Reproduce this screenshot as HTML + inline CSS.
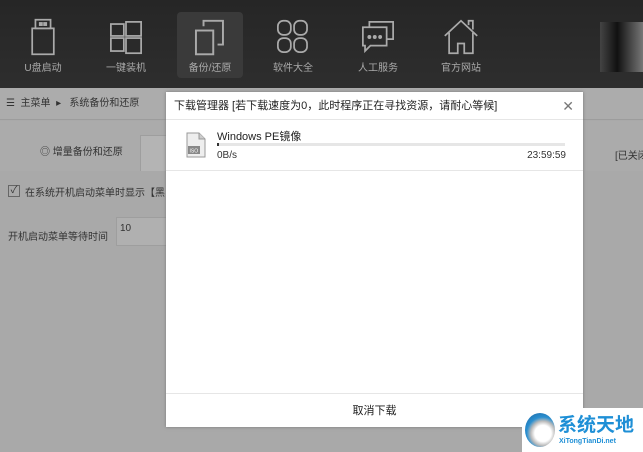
<!DOCTYPE html>
<html><head><meta charset="utf-8"><style>
*{margin:0;padding:0;box-sizing:border-box}
body{width:643px;height:452px;overflow:hidden;background:#a9a9a9;font-family:"Liberation Sans","Noto Sans CJK SC",sans-serif;position:relative;font-size:11px;color:#333}
.top{position:absolute;left:0;top:0;width:643px;height:88px;background:linear-gradient(#262626,#2e2e2e)}
.nav{position:absolute;top:12px;width:66px;height:66px;text-align:center;color:#aaa;font-size:10px}
.nav svg{display:block;margin:6px auto 3px;transform:scale(1.08)}
.sel{background:#3a3a3a;border-radius:4px}
.crumb{position:absolute;top:88px;left:0;width:643px;height:32px;background:#acacac;border-bottom:1px solid #9c9c9c;color:#333;font-size:10px;line-height:32px;padding-left:6px}
.dlg{position:absolute;left:166px;top:92px;width:417px;height:335px;background:#fff;box-shadow:0 0 3px #777}
</style></head><body>
<div class="top">
<div class="nav" style="left:10px"><svg width="24" height="38" viewBox="0 0 24 36" fill="none" stroke="#aaa" stroke-width="1.6"><rect x="5" y="2" width="14" height="8"/><rect x="2" y="10" width="20" height="24"/><rect x="9" y="5" width="2" height="2" fill="#aaa"/><rect x="13" y="5" width="2" height="2" fill="#aaa"/></svg>U盘启动</div>
<div class="nav" style="left:93px"><svg width="32" height="38" viewBox="0 0 32 36" fill="none" stroke="#aaa" stroke-width="1.6"><rect x="2" y="6" width="12" height="11"/><rect x="16" y="4" width="14" height="13"/><rect x="2" y="19" width="12" height="12"/><rect x="16" y="19" width="14" height="14"/></svg>一键装机</div>
<div class="nav sel" style="left:177px"><svg width="32" height="38" viewBox="0 0 32 36" fill="none" stroke="#aaa" stroke-width="1.8"><rect x="3" y="12" width="16" height="22"/><path d="M10 8V3h18v22h-5"/></svg>备份/还原</div>
<div class="nav" style="left:260px"><svg width="32" height="38" viewBox="0 0 32 36" fill="none" stroke="#aaa" stroke-width="1.6"><rect x="2" y="3" width="12" height="13" rx="5"/><rect x="17" y="3" width="12" height="13" rx="5"/><rect x="2" y="19" width="12" height="13" rx="5"/><rect x="17" y="19" width="12" height="13" rx="5"/></svg>软件大全</div>
<div class="nav" style="left:345px"><svg width="32" height="38" viewBox="0 0 32 36" fill="none" stroke="#aaa" stroke-width="1.6"><path d="M2 9h22v17H9l-5 5v-5H2z"/><path d="M8 9V4h22v16h-6"/><circle cx="8" cy="18" r="1" fill="#aaa"/><circle cx="13" cy="18" r="1" fill="#aaa"/><circle cx="18" cy="18" r="1" fill="#aaa"/></svg>人工服务</div>
<div class="nav" style="left:428px"><svg width="34" height="38" viewBox="0 0 34 36" fill="none" stroke="#aaa" stroke-width="1.6"><path d="M2 17L17 3l15 14"/><path d="M6 14v19h8v-9h6v9h8V14"/><path d="M24 7V3h4v8"/></svg>官方网站</div>
<div style="position:absolute;left:600px;top:22px;width:43px;height:50px;background:linear-gradient(90deg,#444,#111 40%,#777)"></div>
</div>
<div class="crumb">☰ &nbsp;主菜单 &nbsp;▸ &nbsp; 系统备份和还原</div>
<div style="position:absolute;left:0;top:121px;width:643px;height:50px;background:#ababab"></div>
<div style="position:absolute;left:20px;top:135px;width:120px;height:36px;font-size:10px;line-height:36px;padding-left:20px">◎ 增量备份和还原</div>
<div style="position:absolute;left:140px;top:135px;width:30px;height:36px;background:#b4b4b4;border:1px solid #9e9e9e;border-bottom:none"></div>
<div style="position:absolute;left:615px;top:147px;font-size:10px;white-space:nowrap">[已关闭</div>
<div style="position:absolute;left:8px;top:185px;width:12px;height:12px;border:1px solid #666;font-size:10px;line-height:10px;text-align:center">✓</div>
<div style="position:absolute;left:25px;top:184px;font-size:10px;white-space:nowrap">在系统开机启动菜单时显示【黑</div>
<div style="position:absolute;left:8px;top:228px;font-size:10px">开机启动菜单等待时间</div>
<div style="position:absolute;left:116px;top:217px;width:55px;height:29px;background:#b0b0b0;border:1px solid #9e9e9e;padding:5px 3px;font-size:10px">10</div>
<div class="dlg">
<div style="height:28px;line-height:28px;padding-left:8px;font-size:11px;color:#222;border-bottom:1px solid #e6e6e6">下载管理器 [若下载速度为0，此时程序正在寻找资源，请耐心等候]<span style="position:absolute;right:9px;top:0;font-size:14px;color:#777">✕</span></div>
<svg style="position:absolute;left:20px;top:40px" width="20" height="26" viewBox="0 0 20 26"><path d="M1 1h12l6 6v18H1z" fill="#eee" stroke="#999"/><path d="M13 1v6h6" fill="#ccc" stroke="#999"/><rect x="2" y="14" width="12" height="8" fill="#888"/><text x="3.5" y="20.5" font-size="5" fill="#fff" font-family="Liberation Sans">ISO</text></svg>
<div style="position:absolute;left:51px;top:36px;font-size:11px;color:#222">Windows PE镜像</div>
<div style="position:absolute;left:51px;top:51px;width:348px;height:3px;background:#e6e6e6"><div style="width:2px;height:3px;background:#333"></div></div>
<div style="position:absolute;left:51px;top:58px;font-size:10px;color:#333">0B/s</div>
<div style="position:absolute;right:17px;top:58px;font-size:10px;color:#333">23:59:59</div>
<div style="position:absolute;left:0;top:78px;width:417px;border-top:1px solid #e6e6e6"></div>
<div style="position:absolute;left:0;top:301px;width:417px;border-top:1px solid #e6e6e6"></div>
<div style="position:absolute;left:0;top:310px;width:417px;text-align:center;font-size:11px;color:#222">取消下载</div>
</div>
<div style="position:absolute;left:522px;top:408px;width:121px;height:44px;background:#fff">
<div style="position:absolute;left:3px;top:5px;width:30px;height:34px;border-radius:50%;background:radial-gradient(circle at 60% 60%,#fff 30%,#bbb 45%,#2a8fd0 60%,#1a5f9a)"></div>
<div style="position:absolute;left:36px;top:2px;font-size:19px;font-weight:bold;color:#1e8fd6">系统天地</div>
<div style="position:absolute;left:37px;top:30px;font-size:7px;font-weight:bold;color:#1e8fd6">XiTongTianDi.net</div>
</div>
</body></html>
